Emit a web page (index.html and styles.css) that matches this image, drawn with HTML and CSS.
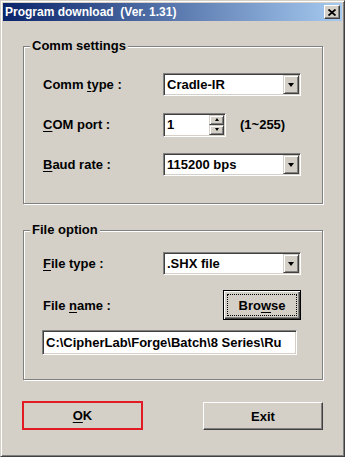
FILE: index.html
```html
<!DOCTYPE html>
<html lang="en">
<head>
    <meta charset="UTF-8">
    <title>Program download</title>
    <link rel="stylesheet" href="styles.css">
</head>
<body>
    <div class="window">
        <div class="titlebar">
            <span class="title">Program download  (Ver. 1.31)</span>
            <button class="close">
                <svg width="8" height="7" viewBox="0 0 8 7"><path d="M0.5 0.5 L7.5 6.5 M7.5 0.5 L0.5 6.5" stroke="#000" stroke-width="1.8" fill="none"/></svg>
            </button>
        </div>
        <div class="content">
            <div class="group comm">
                <div class="group-title">Comm settings</div>
                <div class="row first">
                    <span class="label">Comm <u>t</u>ype :</span>
                    <div class="combo"><span class="value">Cradle-IR</span><span class="drop"><i class="arrow"></i></span></div>
                </div>
                <div class="row">
                    <span class="label"><u>C</u>OM port :</span>
                    <div class="spin">
                        <span class="value">1</span>
                        <span class="spin-btns">
                            <span class="spin-btn"><i class="arrow up"></i></span>
                            <span class="spin-btn"><i class="arrow"></i></span>
                        </span>
                    </div>
                    <span class="range">(1~255)</span>
                </div>
                <div class="row">
                    <span class="label"><u>B</u>aud rate :</span>
                    <div class="combo"><span class="value">115200 bps</span><span class="drop"><i class="arrow"></i></span></div>
                </div>
            </div>

            <div class="group file">
                <div class="group-title">File option</div>
                <div class="row first">
                    <span class="label"><u>F</u>ile type :</span>
                    <div class="combo"><span class="value">.SHX file</span><span class="drop"><i class="arrow"></i></span></div>
                </div>
                <div class="row tall">
                    <span class="label wide">File <u>n</u>ame :</span>
                    <button class="button browse"><span class="focus">Bro<u>w</u>se</span></button>
                </div>
                <div class="path">C:\CipherLab\Forge\Batch\8 Series\Ru</div>
            </div>

            <div class="actions">
                <button class="button ok"><u>O</u>K</button>
                <button class="button exit">Exit</button>
            </div>
        </div>
    </div>
</body>
</html>
```

FILE: styles.css
```css
body {
    margin: 0;
    font-family: 'Liberation Sans', Arial, sans-serif;
    font-size: 13px;
    font-weight: bold;
    color: #000;
    background: #d4d0c8;
}
u {
    text-decoration-thickness: 1px;
    text-underline-offset: 2px;
}
.window {
    width: 345px;
    height: 457px;
    box-sizing: border-box;
    border: 1px solid;
    border-color: #d4d0c8 #404040 #404040 #d4d0c8;
    box-shadow: inset 1px 1px #fff, inset -1px -1px #808080;
    padding: 2px;
    background: #d4d0c8;
}
.titlebar {
    height: 18px;
    display: flex;
    align-items: center;
    justify-content: space-between;
    padding: 0 2px;
    background: linear-gradient(to right, #0a246a, #a6caf0);
}
.title {
    color: #fff;
    font-size: 12px;
    white-space: pre;
}
.close {
    width: 16px;
    height: 14px;
    padding: 0;
    box-sizing: border-box;
    display: flex;
    align-items: center;
    justify-content: center;
    border: 1px solid;
    border-color: #fff #404040 #404040 #fff;
    box-shadow: inset -1px -1px #808080;
    background: #d4d0c8;
}
.content {
    padding: 25px 19px 0 20px;
}
.group {
    border: 1px solid #808080;
    box-shadow: 1px 1px #fff, inset 1px 1px #fff;
    padding: 0 0 27px 19px;
}
.group.file {
    margin-top: 26px;
    padding-bottom: 24px;
}
.group-title {
    width: fit-content;
    margin: -9px 0 0 -13px;
    padding: 0 2px;
    line-height: 16px;
    background: #d4d0c8;
}
.row {
    display: flex;
    align-items: center;
    height: 23px;
    margin-top: 17px;
}
.row.first {
    margin-top: 19px;
}
.file .row.first {
    margin-top: 14px;
}
.row.tall {
    height: 30px;
    margin-top: 15px;
}
.label {
    width: 120px;
}
.label.wide {
    width: 180px;
}
.combo, .spin, .path {
    box-sizing: border-box;
    height: 23px;
    border: 1px solid;
    border-color: #808080 #fff #fff #808080;
    box-shadow: inset 1px 1px #404040, inset -1px -1px #d4d0c8;
    background: #fff;
    padding: 1px;
    display: flex;
    align-items: center;
}
.combo {
    width: 138px;
}
.value {
    flex: 1;
    padding-left: 2px;
    white-space: nowrap;
}
.drop, .spin-btn {
    box-sizing: border-box;
    width: 16px;
    height: 19px;
    border: 1px solid;
    border-color: #d4d0c8 #404040 #404040 #d4d0c8;
    box-shadow: inset 1px 1px #fff, inset -1px -1px #808080;
    background: #d4d0c8;
    display: flex;
    align-items: center;
    justify-content: center;
}
.arrow {
    width: 0;
    height: 0;
    border-left: 3.5px solid transparent;
    border-right: 3.5px solid transparent;
    border-top: 4px solid #000;
}
.spin {
    width: 63px;
    height: 24px;
}
.spin-btns {
    display: flex;
    flex-direction: column;
}
.spin-btn {
    width: 15px;
    height: 10px;
}
.spin-btn .arrow {
    border-left-width: 2.5px;
    border-right-width: 2.5px;
    border-top-width: 3px;
}
.spin-btn .arrow.up {
    border-top: 0;
    border-bottom: 3px solid #000;
}
.range {
    margin-left: 14px;
}
.button {
    font: inherit;
    color: #000;
    padding: 0;
    background: #d4d0c8;
    box-sizing: border-box;
    border: 1px solid;
    border-color: #fff #404040 #404040 #fff;
    box-shadow: inset -1px -1px #808080;
}
.browse {
    width: 78px;
    height: 30px;
    border: 1px solid #000;
    box-shadow: inset 1px 1px #fff, inset -1px -1px #404040, inset -2px -2px #808080;
    padding: 3px;
}
.focus {
    display: flex;
    align-items: center;
    justify-content: center;
    height: 100%;
    border: 1px dotted #000;
    box-sizing: border-box;
}
.path {
    width: 255px;
    height: 25px;
    margin: 10px 0 0 -1px;
    padding-left: 3px;
    white-space: nowrap;
    overflow: hidden;
}
.actions {
    display: flex;
    justify-content: space-between;
    align-items: flex-start;
    margin: 21px 0 0 -1px;
}
.ok {
    width: 121px;
    height: 29px;
    border: 2px solid #e01b24;
    box-shadow: none;
}
.exit {
    width: 120px;
    height: 28px;
    margin-top: 1px;
}
```
